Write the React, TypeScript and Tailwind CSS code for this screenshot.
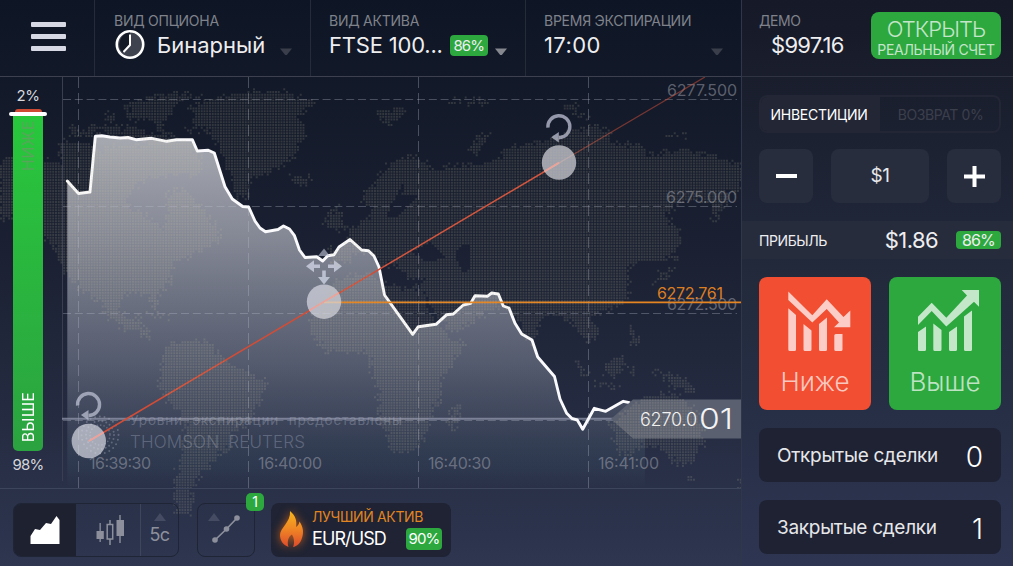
import type { ReactNode } from "react";

const land = [
  // Greenland, Arctic islands, Iceland
  "185,130 197,117 188,110 197,103 217,96 257,90 290,92 300,97 317,100 300,115 305,135 293,158 280,168 260,177 250,182 248,197 238,197 232,178 225,162 218,142 207,130",
  "125,110 135,101 148,97 160,93 190,93 203,95 180,103 168,117 160,128 148,118 135,122",
  "104,114 116,110 118,118 106,122",
  "66,128 76,126 80,134 94,122 98,132 88,138 72,136",
  "104,124 122,128 138,126 150,134 168,130 176,138 190,144 200,156 204,172 194,178 186,166 174,160 168,148 150,146 140,138 120,138 106,134",
  "291,177 300,175 313,178 310,184 298,183",
  // North America
  "0,160 40,159 62,164 56,146 62,137 75,146 84,141 100,150 120,146 146,145 160,142 176,150 200,166 195,178 178,172 160,176 140,182 129,191 130,205 147,218 163,228 170,215 167,192 183,188 193,198 207,215 220,232 223,243 207,248 193,255 173,265 170,282 157,295 160,312 153,308 147,292 123,295 120,308 127,322 140,315 143,328 152,332 150,342 140,333 123,327 107,318 100,305 83,292 77,282 67,275 58,258 45,235 20,215 0,222",
  "146,312 162,314 172,320 158,318",
  // South America
  "160,368 168,345 193,340 207,342 223,355 233,368 253,374 267,383 257,410 247,423 233,433 230,447 217,457 207,467 200,477 193,487 192,498 193,516 178,515 172,500 177,470 182,450 185,423 173,407 160,390",
  // Africa and Madagascar
  "310,322 318,305 327,288 347,275 370,273 380,282 400,287 425,288 440,318 450,340 465,341 462,352 445,375 440,385 442,400 430,415 428,432 418,446 408,453 392,453 385,435 378,413 378,387 370,370 370,355 355,352 325,352 312,335",
  "452,407 463,400 460,417 453,432 448,423",
  // Britain
  "325,220 337,205 346,226 338,232 325,228",
  // Eurasia
  "361,200 375,182 390,163 412,155 432,165 430,172 450,165 490,162 500,157 510,145 540,143 560,135 580,128 595,124 610,130 612,143 640,145 650,155 680,148 710,155 735,163 742,161 742,192 726,192 726,206 713,226 711,206 700,200 675,205 665,215 678,228 680,240 672,256 658,262 645,262 625,268 630,280 628,300 610,310 590,318 600,330 595,342 585,340 572,325 560,315 545,315 533,344 526,338 520,322 510,310 490,305 484,315 470,325 453,332 445,325 430,300 420,289 426,278 410,280 402,270 392,262 386,268 372,254 355,252 346,265 332,264 331,250 350,242 345,230 365,219 374,215 366,205",
  "468,152 478,137 505,128 490,134 478,153",
  "441,102 460,100 500,98 480,104",
  "373,112 382,109 411,109 398,118 388,126",
  "560,106 572,102 580,112 590,120 574,114",
  "664,132 686,132 684,137 666,137",
  // Japan
  "676,228 684,234 676,250 676,270 662,280 652,284 660,274 672,264",
  // South-east Asia, New Guinea
  "568,352 580,362 592,378 584,376",
  "602,370 612,360 622,352 625,362 618,378 608,377",
  "590,381 606,384 620,387 604,388",
  "628,322 636,332 640,348 632,344",
  "628,362 634,372 630,380",
  "653,370 668,372 685,378 700,392 684,390 670,386",
  // Australia, Tasmania, New Zealand
  "611,425 622,412 640,401 650,395 665,394 682,396 696,412 704,428 702,444 692,464 676,464 662,450 645,446 620,456 616,444",
  "686,473 692,473 692,479 686,479",
  "736,482 742,482 742,488 736,488",
];

const seas = [
  "390,207 400,190 405,178 402,194 417,196 397,216 386,218",
  "412,252 430,243 446,257 428,262",
  "458,248 470,243 470,270 463,272 456,258",
  "424,290 430,304 444,328 440,328 426,306",
];

type Polygon = number[][];

const toPolygon = (points: string): Polygon => points.split(" ").map((p) => p.split(",").map(Number));
const landPolygons = land.map(toPolygon);
const seaPolygons = seas.map(toPolygon);

function contains(polygon: Polygon, x: number, y: number) {
  let inside = false;
  for (let i = 0, j = polygon.length - 1; i < polygon.length; j = i++) {
    const [xi, yi] = polygon[i];
    const [xj, yj] = polygon[j];
    if (yi > y !== yj > y && x < ((xj - xi) * (y - yi)) / (yj - yi) + xi) inside = !inside;
  }
  return inside;
}

function noise(x: number, y: number) {
  const n = Math.sin(x * 12.9898 + y * 78.233) * 43758.5453;
  return n - Math.floor(n) - 0.5;
}

// One square per grid cell on land, coasts are roughened a bit
function buildDots() {
  const step = 2.75;
  let d = "";
  for (let row = 0; row < 160; row++) {
    for (let col = 0; col < 270; col++) {
      const x = col * step + 1;
      const y = 80 + row * step + 1;
      const nx = x + noise(col, row) * 7;
      const ny = y + noise(row + 31, col) * 7;
      const onLand = landPolygons.some((p) => contains(p, nx, ny));
      if (onLand && !seaPolygons.some((p) => contains(p, x, y))) {
        d += `M${(x - 1).toFixed(2)} ${(y - 1).toFixed(2)}h1.95v1.95h-1.95z`;
      }
    }
  }
  return d;
}

const mapDots = buildDots();

const line =
  "67.3,181 78.5,193.5 90,192 95.3,136.3 101.7,135.8 110,137 120,138 128,137.5 136,139.7 151.7,138.3 166.7,141.3 176.5,139.7 192.3,139.7 197.3,151 208.3,150.3 214.3,153 225,186.7 232.3,199 242.7,206.5 248.7,207 255,221 260,228 265.5,231.7 278,229.5 283.5,226 289.5,229 294.5,235.7 299.5,250 305,257.5 316.7,256.7 322.7,261 327.7,255.7 334,254.7 339,247 350,239.5 361.7,250 368.5,250.7 374,256 379,267 384.5,295 400,316.7 412.7,334.3 418.3,326.7 436,324.3 446.7,314.7 453.3,314 463.3,305 470.7,303.3 475,295.7 487.3,296.3 491.7,293 498.3,294 503.3,306 509,308 515,323.3 521.7,334 532,340 537.7,357 554.5,376.5 560,399 566.7,413.3 571.7,418.3 577.3,420 582.7,429.3 594.3,408.3 605.7,411.3 623.3,401.3 629.3,402.7";

function WorldMap() {
  return (
    <svg className="pointer-events-none absolute top-0 left-0" width="741" height="566" viewBox="0 0 741 566">
      <path d={mapDots} fill="#c9c4a0" fillOpacity="0.17" />
    </svg>
  );
}

function RotateArrow({ x, y }: { x: number; y: number }) {
  return (
    <g transform={`translate(${x} ${y})`} opacity="0.8">
      <path d="M-10.9 1 A11 11 0 1 1 0 11" fill="none" stroke="#b4b8ca" strokeWidth="3.4" />
      <path d="M-7.6 10.6L0 5.4V15.8Z" fill="#b4b8ca" />
    </g>
  );
}

function Chart() {
  return (
    <svg className="relative block" width="741" height="411" viewBox="0 77 741 411">
      <defs>
        <linearGradient id="area" x1="0" y1="136" x2="0" y2="488" gradientUnits="userSpaceOnUse">
          <stop offset="0" stopColor="#e6e6ea" stopOpacity="0.7" />
          <stop offset="0.3" stopColor="#dcdee8" stopOpacity="0.54" />
          <stop offset="0.65" stopColor="#d0d6e6" stopOpacity="0.29" />
          <stop offset="0.8" stopColor="#b4c0d4" stopOpacity="0.18" />
          <stop offset="0.93" stopColor="#6a94a0" stopOpacity="0.1" />
          <stop offset="1" stopColor="#6a94a0" stopOpacity="0" />
        </linearGradient>
      </defs>

      <polygon points={`67.3,488 ${line} 645,402.7 645,488`} fill="url(#area)" />

      {/* Grid */}
      <path d="M62.5 77V481" stroke="#3a3f50" />
      <g stroke="#b9bccb" strokeOpacity="0.33" strokeDasharray="8 3.8">
        <path d="M78.5 77V488M248.5 77V488M418.5 77V488M588.5 77V488" strokeDasharray="11 5" />
        <path d="M63 99.5H737M63 206.5H737M63 313.5H737M63 420.5H620" />
      </g>
      <path d="M62 418.7H620" stroke="#9196ac" strokeOpacity="0.75" strokeWidth="2" />

      <g className="font-[Inter]" fill="#a2a4b0" fillOpacity="0.52" fontSize="16">
        <text x="667" y="96" textLength="70">6277.500</text>
        <text x="666" y="203" textLength="71">6275.000</text>
        <text x="667" y="310" textLength="70">6272.500</text>
        <text x="89" y="469" textLength="62">16:39:30</text>
        <text x="258" y="469" textLength="64">16:40:00</text>
        <text x="428" y="469" textLength="63">16:40:30</text>
        <text x="598" y="469" textLength="61">16:41:00</text>
      </g>
      <g className="font-[Inter]" fill="#a3a8bc" fillOpacity="0.4">
        <text className="[word-spacing:5px]" x="130" y="425" fontSize="13.5" textLength="272">
          Уровни экспирации предоставлены
        </text>
        <text className="[word-spacing:4px]" x="130" y="448" fontSize="17" fontWeight="300" textLength="175">
          THOMSON REUTERS
        </text>
      </g>

      {/* Reuters mark */}
      <g fill="none" stroke="#b4b8ca" strokeOpacity="0.35" strokeLinecap="round">
        <circle cx="100" cy="435" r="18.5" strokeWidth="2" strokeDasharray="0 4.8" />
        <circle cx="100" cy="435" r="14" strokeWidth="2" strokeDasharray="0 4" />
        <circle cx="100" cy="435" r="10" strokeWidth="1.7" strokeDasharray="0 3.4" />
      </g>

      <polyline points={line} fill="none" stroke="#fafafc" strokeWidth="2.9" strokeLinejoin="round" strokeLinecap="round" />

      {/* Trend line and level */}
      <path d="M89 441L559 163" stroke="#d34c36" strokeWidth="1.5" />
      <path d="M559 163L705 77" stroke="#d8523a" strokeOpacity="0.5" strokeWidth="1.3" />
      <path d="M324 302.3H741" stroke="#e58522" strokeWidth="1.8" />
      <text className="font-[Inter]" x="657" y="299" fontSize="16" textLength="66" fill="#dc7d22">
        6272.761
      </text>

      <g fill="#d9dae4" fillOpacity="0.7">
        <circle cx="88.8" cy="441" r="17.2" />
        <circle cx="324" cy="301.7" r="17.2" />
        <circle cx="559" cy="162.5" r="17.2" />
      </g>
      <path d="M89 441L103.600 432.300M324 301.700L338.700 293M309.300 310.400L324 301.700M544.400 171.300L559 162.500" stroke="#f0a098" strokeWidth="1.500" />
      <RotateArrow x={88.5} y={404.500} />
      <RotateArrow x={558.8} y={126.700} />
      <g fill="#c3c8d8" fillOpacity="0.9">
        <path d="M306 266.3L314 260.3V264.5H320V268.1H314V272.3Z" />
        <path d="M342 266.3L334 260.3V264.5H328V268.1H334V272.3Z" />
        <path d="M324 284.5L318 277H322.2V270.5H325.8V277H330Z" />
        <path d="M324 248.5L318 256H330Z" fillOpacity="0.6" />
      </g>

      {/* Current price */}
      <path d="M611 419L633 399.5H741V438.5H633Z" fill="#5b6070" />
      <g className="font-[Inter]" fill="#f4f4f6">
        <text x="640" y="426" fontSize="18" fontWeight="300" textLength="57">6270.0</text>
        <text x="699" y="429" fontSize="29" fontWeight="300" textLength="34" lengthAdjust="spacingAndGlyphs">01</text>
      </g>
    </svg>
  );
}

function HeaderCell({ label, className, arrow, children }: { label: string; className: string; arrow: string; children: ReactNode }) {
  return (
    <div className={`flex flex-col border-l border-[#262b39] pt-[13px] ${className}`}>
      <p className="text-sm leading-4 tracking-[-0.25px] text-[#7f828b]">{label}</p>
      <div className="flex h-8 items-center pr-[18px] text-[22px] whitespace-nowrap text-[#eeeef0]">
        {children}
        <svg className="mt-3.5 ml-auto shrink-0" width="12" height="8" viewBox="0 0 12 8">
          <path d="M0 0.5H12L6.8 7H5.2Z" fill={arrow} />
        </svg>
      </div>
    </div>
  );
}

function Header() {
  return (
    <header className="relative flex h-[77px] border-b border-[#3d404e]">
      <div className="flex w-[94px] flex-col gap-[7px] pt-[22px] pl-[31px]">
        <div className="h-[5px] w-[35px] rounded-[1px] bg-[#d6d8e4]" />
        <div className="h-[5px] w-[35px] rounded-[1px] bg-[#d6d8e4]" />
        <div className="h-[5px] w-[35px] rounded-[1px] bg-[#d6d8e4]" />
      </div>
      <HeaderCell label="ВИД ОПЦИОНА" className="w-[216px] pl-[19px]" arrow="#3a3e4b">
        <svg className="mr-3 shrink-0" width="31" height="30" viewBox="0 0 31 30">
          <circle cx="16" cy="14.5" r="13.2" fill="#3f434f" stroke="#fff" strokeWidth="2.6" />
          <path d="M16 15V2.5A12 12 0 0 0 8.500 22.500Z" fill="#151a27" />
          <path d="M16 4.500V15L9.500 22" fill="none" stroke="#fff" strokeWidth="2" />
        </svg>
        <span>Бинарный</span>
      </HeaderCell>
      <HeaderCell label="ВИД АКТИВА" className="w-[215px] pl-[18px]" arrow="#85888f">
        <span className="tracking-[-0.2px]">FTSE 100...</span>
        <span className="ml-[7px] w-[38px] rounded bg-[#2ca83f] text-center text-[15px] leading-[21px] tracking-[-0.9px]">86%</span>
      </HeaderCell>
      <HeaderCell label="ВРЕМЯ ЭКСПИРАЦИИ" className="w-[216px] pl-[18px]" arrow="#3a3e4b">
        <span className="tracking-[0.4px]">17:00</span>
      </HeaderCell>
    </header>
  );
}

function SentimentBar() {
  return (
    <div className="absolute top-[87px] left-0 flex w-14 flex-col items-center text-[15px] text-[#d5d7dc]">
      <span className="leading-[18px] tracking-[-0.5px]">2%</span>
      <div className="mt-[4px] h-[3px] w-[27px] rounded-t bg-[#cf4a32]" />
      <div className="h-[4px] w-[38px] rounded-full bg-white" />
      <div className="flex h-[335px] w-[30px] items-center justify-between rounded-b-[5px] bg-linear-to-b from-[#28c73c] to-[#2ba340] pt-[4px] pb-[9px] [writing-mode:vertical-rl]">
        <span className="rotate-180 text-[16px] leading-none tracking-[0.6px] text-[#56a75a]">НИЖЕ</span>
        <span className="rotate-180 text-[16px] leading-none tracking-[0.2px] text-white">ВЫШЕ</span>
      </div>
      <span className="mt-[5px] leading-[18px] tracking-[-0.8px]">98%</span>
    </div>
  );
}

function Toolbar() {
  return (
    <div className="relative flex h-[78px] border-t border-[#3c455b] pt-[14px] pl-[13px]">
      <div className="flex h-[54px] w-[166px] overflow-hidden rounded-lg border-[1.5px] border-[#1f2535]">
        <div className="flex w-[62px] items-center justify-center bg-[#1d2130]">
          <svg width="30" height="29" viewBox="0 0 30 29">
            <path d="M0.500 28V20L5 13L10 14L16 7L21 8L26.500 0L29.500 4V28Z" fill="#fff" />
          </svg>
        </div>
        <div className="flex w-[65px] items-center justify-center border-r border-[#3e465c] pl-1">
          <svg width="28" height="32" viewBox="0 0 28 32" fill="#8d909c">
            <path d="M3.500 9h1.300v8h3v8h-3v3h-1.300v-3H0.500v-8h3z" />
            <path d="M14 6v5M14 25v6" stroke="#8d909c" strokeWidth="1.500" />
            <rect x="11.200" y="10.500" width="5.500" height="14.500" fill="none" stroke="#8d909c" strokeWidth="1.500" />
            <path d="M23.300 1h1.400v5h3.300v16h-3.300v7h-1.400v-7H20.500V6h2.800z" />
          </svg>
        </div>
        <div className="flex flex-1 flex-col items-center pt-[9px] text-[#8d909c]">
          <svg width="12" height="8" viewBox="0 0 12 8">
            <path d="M6 0L12 8H0Z" fill="#444b63" />
          </svg>
          <span className="mt-[4px] text-[18px] leading-5 tracking-[-0.5px]">5с</span>
        </div>
      </div>

      <div className="relative ml-[18px] h-[54px] w-[58px] rounded-lg border-[1.5px] border-[#1f2535]">
        <svg width="55" height="51" viewBox="0 0 55 51">
          <path d="M16 9L22 17H10Z" fill="#444b63" />
          <path d="M17 36L28.500 25L39 14" stroke="#8d909c" strokeWidth="1.700" />
          <g fill="#8d909c">
            <circle cx="17" cy="36" r="2.800" />
            <circle cx="28.500" cy="25" r="2.800" />
            <circle cx="39" cy="14" r="2.800" />
          </g>
        </svg>
        <span className="absolute -top-[11px] -right-[10px] h-[18px] w-[18px] rounded-[5px] bg-[#2ca83f] text-center text-[14px] leading-[18px] text-white">
          1
        </span>
      </div>

      <div className="ml-4 flex h-[54px] w-[180px] rounded-lg bg-[#1f2333]">
        <svg className="mt-[4px] ml-1 shrink-0 drop-shadow-[0_0_5px_#b55a20]" width="32" height="44" viewBox="0 0 32 44">
          <defs>
            <linearGradient id="fire" x1="0" y1="0" x2="0" y2="1">
              <stop offset="0" stopColor="#f7b51c" />
              <stop offset="0.5" stopColor="#ef8625" />
              <stop offset="1" stopColor="#dd4a2c" />
            </linearGradient>
          </defs>
          <path
            d="M15 4C21 9 22 14 21 20C23 19 24 17 24.500 14.500C28 20 29 25 27 31C25.500 36 22 39.500 18 40C20 36 19 31 17 27.500C13 30 12 35 13.500 40C8 38 5 33 5 28C5 21 16 15 15 4Z"
            fill="url(#fire)"
          />
        </svg>
        <div className="ml-[5px] flex-1 pt-[6px] pr-[9px]">
          <p className="text-sm leading-4 tracking-[-0.35px] text-[#e08522]">ЛУЧШИЙ АКТИВ</p>
          <div className="flex items-start justify-between">
            <span className="mt-[2px] text-lg leading-6 tracking-[-0.9px] text-white">EUR/USD</span>
            <span className="mt-[3px] w-9 rounded bg-[#2ca83f] text-center text-[15px] leading-[22px] tracking-[-0.9px] text-white">90%</span>
          </div>
        </div>
      </div>
    </div>
  );
}

function TradeButton({ label, color, children }: { label: string; color: string; children: ReactNode }) {
  return (
    <button className={`flex h-[133px] w-28 flex-col items-center rounded-lg pt-3 text-[26px] font-light text-white/70 ${color}`}>
      <svg width="72" height="64" viewBox="-4 0 72 64" fill="#fff" fillOpacity="0.72">
        {children}
      </svg>
      <span className="mt-[13px] leading-8">{label}</span>
    </button>
  );
}

function DealsRow({ label, count }: { label: string; count: number }) {
  return (
    <div className="flex h-[54px] items-center justify-between rounded-lg bg-[#1f2232] pt-[3px] pr-[18px] pl-[18px] text-white">
      <span className="text-[19px] tracking-[-0.3px] text-[#e6e7ea]">{label}</span>
      <span className="text-[28px] font-light">{count}</span>
    </div>
  );
}

function Sidebar() {
  return (
    <aside className="flex w-[272px] flex-col border-l border-[#30374a] bg-linear-to-b from-[#161927] via-[#222a3c] to-[#2d3552]">
      <div className="flex h-[77px] shrink-0 justify-between border-b border-[#303442] pr-3 pl-[17px]">
        <div className="pt-[13px]">
          <p className="text-sm leading-4 tracking-[-0.4px] text-[#7f828b]">ДЕМО</p>
          <p className="pl-3 text-[22px] leading-8 tracking-[-0.7px] text-[#eeeef0]">$997.16</p>
        </div>
        <button className="mt-3 flex h-[47px] w-[130px] flex-col items-center rounded-lg bg-[#2ca83f] pt-[5px] whitespace-nowrap text-[#c4e5c9]">
          <span className="text-[22px] leading-6 font-light tracking-[-0.9px]">ОТКРЫТЬ</span>
          <span className="text-[14px] leading-[17px] tracking-[-0.3px]">РЕАЛЬНЫЙ СЧЕТ</span>
        </button>
      </div>

      <div className="mt-[18px] mr-3 ml-[17px] flex h-[38px] overflow-hidden rounded-lg border-2 border-[#222635] text-[14px]">
        <div className="flex w-[119px] items-center justify-center bg-[#222635] pr-[3px] tracking-[-0.25px] text-white">ИНВЕСТИЦИИ</div>
        <div className="flex flex-1 items-center justify-center pl-0.5 tracking-[-0.4px] text-[#3b3f4c]">ВОЗВРАТ 0%</div>
      </div>

      <div className="mt-4 mr-3 ml-[17px] flex h-[54px] justify-between text-white">
        <button className="flex w-[54px] items-center justify-center rounded-lg bg-[#272d3d]">
          <span className="h-1 w-[21px] bg-white" />
        </button>
        <div className="flex w-[98px] items-center justify-center rounded-lg bg-[#272d3d] text-[19px] tracking-[-0.5px] text-[#e6e7ea]">$1</div>
        <button className="flex w-[54px] items-center justify-center rounded-lg bg-[#272d3d]">
          <svg width="21" height="21" viewBox="0 0 21 21">
            <path d="M0 10.500H21M10.500 0V21" stroke="#fff" strokeWidth="4" />
          </svg>
        </button>
      </div>

      <div className="mt-[18px] flex h-[38px] items-center bg-[#272c3d] pr-3 pl-[17px] text-[#eeeef0]">
        <span className="text-[14px] tracking-[-0.4px]">ПРИБЫЛЬ</span>
        <span className="ml-auto text-[22px] tracking-[-0.6px]">$1.86</span>
        <span className="ml-[18px] w-[45px] rounded bg-[#2ca83f] text-center text-[16px] leading-[18px] tracking-[-0.9px]">86%</span>
      </div>

      <div className="mt-[18px] mr-3 ml-[17px] flex justify-between">
        <TradeButton label="Ниже" color="bg-[#f14e32]">
          <path d="M5.300 2.500L29.300 26.300L43.700 10.300L60.500 28L67.300 21.500V38.300H51L56 33.500L43.700 20L29.300 33.500L5.300 11Z" />
          <path d="M5.300 19.300L13 26V60.500Q13 62 11.500 62H6.800Q5.300 62 5.300 60.500ZM20.500 35L28.500 41.500V60.500Q28.500 62 27 62H22Q20.500 62 20.500 60.500ZM36 35L44 28.500V60.500Q44 62 42.500 62H37.500Q36 62 36 60.500ZM51.300 46.500Q51.300 45 52.800 45H59.500V60.500Q59.500 62 58 62H52.800Q51.300 62 51.300 60.500Z" />
        </TradeButton>
        <TradeButton label="Выше" color="bg-[#2ca83f]">
          <path d="M5 27.700L18.700 13.700L33.300 28.700L54 6.500L48.700 1H66V17.700L61 12.700L33.300 37.500L18.700 22L5 36Z" />
          <path d="M5 43L13 37.500V60.500Q13 62 11.500 62H6.500Q5 62 5 60.500ZM20.300 34.500L28.500 41V60.500Q28.500 62 27 62H21.800Q20.300 62 20.300 60.500ZM36 43L44 37.500V60.500Q44 62 42.500 62H37.500Q36 62 36 60.500ZM51 27.500L59 21.500V60.500Q59 62 57.500 62H52.500Q51 62 51 60.500Z" />
        </TradeButton>
      </div>

      <div className="mt-[18px] mr-3 ml-[17px] flex flex-col gap-[18px]">
        <DealsRow label="Открытые сделки" count={0} />
        <DealsRow label="Закрытые сделки" count={1} />
      </div>
    </aside>
  );
}

export default function App() {
  return (
    <div className="flex h-[566px] w-[1013px] overflow-hidden bg-[#161927] font-[Inter,sans-serif]">
      <main className="relative w-[741px] bg-linear-to-b from-[#0e1524] from-0% via-[#1b2132] via-45% to-[#2e3650] to-100%">
        <Header />
        <Chart />
        <WorldMap />
        <Toolbar />
        <SentimentBar />
      </main>
      <Sidebar />
    </div>
  );
}
